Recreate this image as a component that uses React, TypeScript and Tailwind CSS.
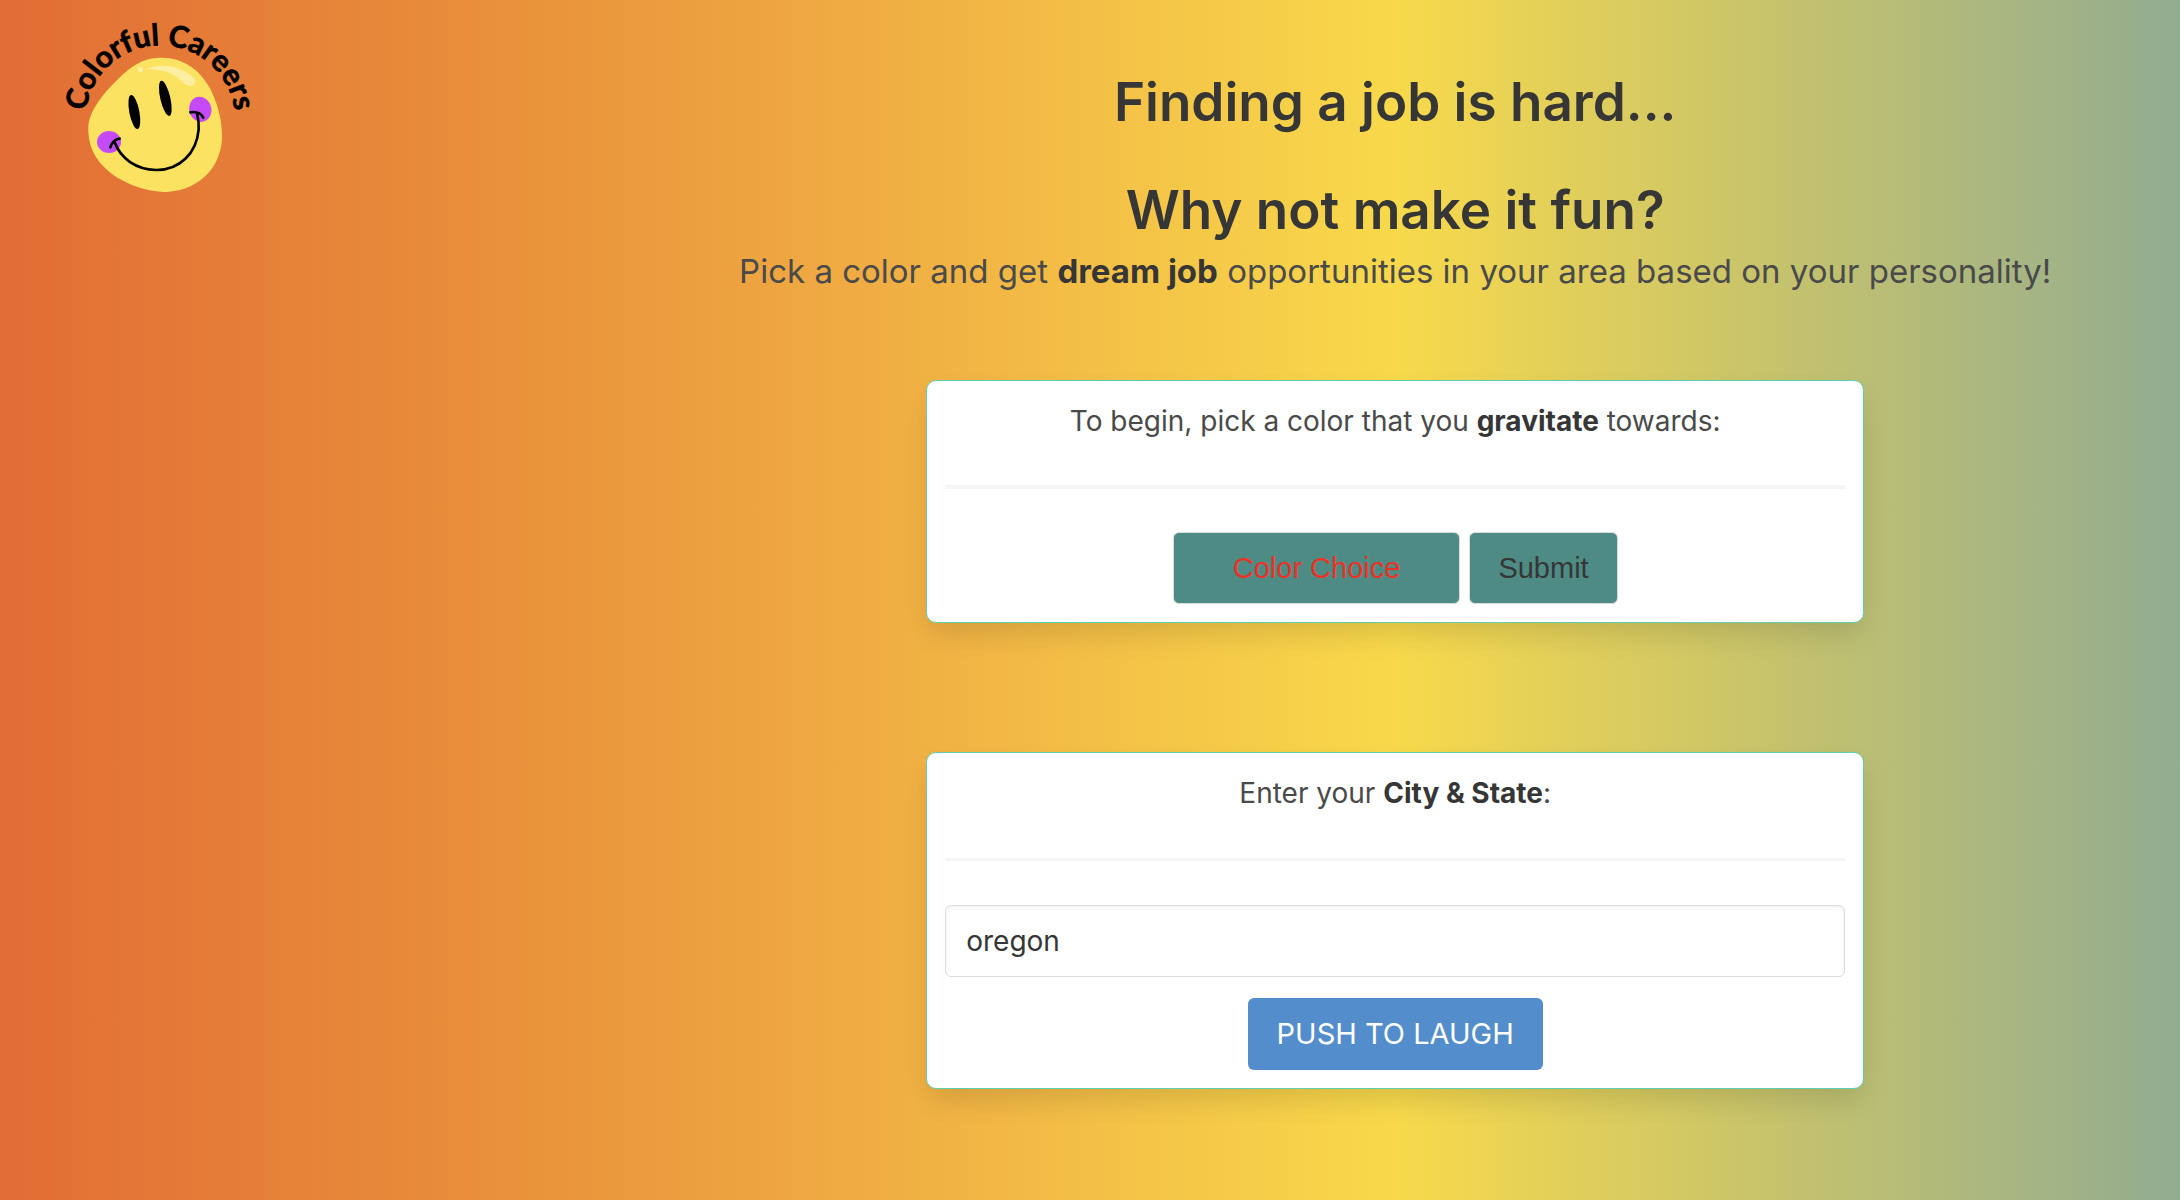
import { useState } from "react";
import type { ReactNode } from "react";

function Logo() {
  return (
    <svg viewBox="0 0 660 570" className="block h-[190px] w-[220px]" role="img" aria-label="Colorful Careers logo">
      <defs>
        <path id="logo-arc" d="M 106 331 A 225 225 0 1 1 556 331" />
      </defs>
      <path
        d="M330 143 C395 141 448 176 480 235 C506 286 518 340 516 388 C511 470 452 540 350 546 C290 546 212 520 165 474 C130 440 112 400 115 345 C120 300 158 252 205 206 C240 172 275 144 330 143 Z"
        fill="#fbe260"
      />
      <circle cx="271" cy="178" r="8" fill="#fdeea2" />
      <path
        d="M287 176 C330 162 372 165 402 183 C420 193 434 203 436 212 C436 224 425 230 412 226 C400 221 388 205 370 194 C345 180 320 180 287 176 Z"
        fill="#fdeea2"
      />
      <ellipse cx="177" cy="396" rx="36" ry="33" fill="#c54bf8" />
      <ellipse cx="451" cy="298" rx="33" ry="38" fill="#c54bf8" transform="rotate(-15 451 298)" />
      <ellipse cx="253" cy="306" rx="15" ry="52" transform="rotate(-11 253 306)" />
      <ellipse cx="346" cy="265" rx="15" ry="54" transform="rotate(-13 346 265)" />
      <g fill="none" stroke="#000" strokeWidth="8" strokeLinecap="round">
        <path d="M194 397 C212 446 258 478 318 480 C388 481 440 430 446 358 C447 340 445 325 441 310" />
        <path d="M181 412 C186 397 194 388 209 386" />
        <path d="M421 307 C438 304 452 309 460 323" />
      </g>
      <text
        className="font-['Lato',sans-serif] text-[90px] font-bold"
        textAnchor="middle"
        stroke="#000"
        strokeWidth="2"
      >
        <textPath href="#logo-arc" startOffset="50%">
          Colorful Careers
        </textPath>
      </text>
    </svg>
  );
}

function Card({ children }: { children: ReactNode }) {
  return (
    <section className="w-3/5 max-w-[938px] rounded-[10px] border border-[#5fcfb0] bg-white px-[18px] pt-[19px] pb-[18px] text-center shadow-[0_14px_28px_-3px_rgba(10,10,10,0.12)]">
      {children}
    </section>
  );
}

export default function App() {
  const [place, setPlace] = useState("oregon");
  return (
    <div className="flex min-h-screen items-start bg-linear-[90deg,#e26d35_0%,#e9923b_24%,#f0ad43_40%,#f8d94b_64%,#c2c16f_83%,#92ac91_100%] font-['Inter',sans-serif] text-[28px] leading-[42px] text-[#4a4a4a]">
      <header className="w-[28%] pt-[10px] pl-[50px]">
        <Logo />
      </header>
      <main className="flex flex-1 flex-col items-center pt-[70px]">
        <div className="text-center">
          <h1 className="text-[53px] leading-[64px] font-semibold text-[#363636]">Finding a job is hard...</h1>
          <h2 className="mt-11 text-[53px] leading-[64px] font-semibold text-[#363636]">Why not make it fun?</h2>
          <p className="mt-[2px] text-[33px] leading-[54px]">
            Pick a color and get <strong className="font-bold text-[#363636]">dream job</strong> opportunities in your
            area based on your personality!
          </p>
        </div>

        <div className="mt-[82px] flex w-full flex-col items-center gap-[129px]">
          <Card>
            <p>
              To begin, pick a color that you <strong className="font-bold text-[#363636]">gravitate</strong> towards:
            </p>
            <hr className="mt-[43px] mb-[43px] h-1 border-0 bg-[#f5f5f5]" />
            <div className="flex justify-center gap-[9px] font-['Liberation_Sans',sans-serif] text-[29px]">
              <button type="button" className="h-[72px] rounded-md border border-[#dbdbdb] bg-[#4e8b85] px-[59px] text-[#ef3124]">
                Color Choice
              </button>
              <button type="submit" className="h-[72px] rounded-md border border-[#dbdbdb] bg-[#4e8b85] px-[28px] text-[#363636]">
                Submit
              </button>
            </div>
          </Card>

          <Card>
            <p>
              <label htmlFor="place">
                Enter your <strong className="font-bold text-[#363636]">City &amp; State</strong>:
              </label>
            </p>
            <hr className="mt-11 mb-11 h-[3px] border-0 bg-[#f5f5f5]" />
            <input
              id="place"
              type="text"
              value={place}
              onChange={(e) => setPlace(e.target.value)}
              className="block h-[72px] w-full rounded-md border border-[#dbdbdb] bg-white px-5 text-[#363636] shadow-[inset_0_2px_4px_rgba(10,10,10,0.05)]"
            />
            <button type="button" className="mt-[21px] h-[72px] rounded-md bg-[#548dcb] px-[29px] text-[29px] text-white">
              PUSH TO LAUGH
            </button>
          </Card>
        </div>
      </main>
    </div>
  );
}
